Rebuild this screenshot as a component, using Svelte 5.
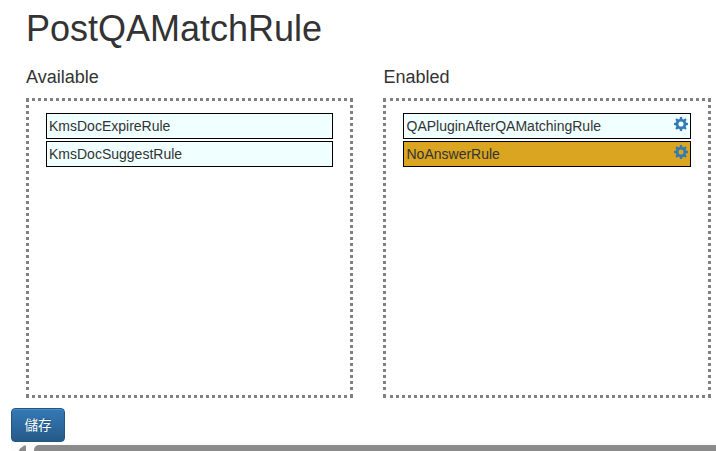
<script>
  const lists = [
    {
      title: 'Available',
      rules: [{ name: 'KmsDocExpireRule' }, { name: 'KmsDocSuggestRule' }]
    },
    {
      title: 'Enabled',
      rules: [
        { name: 'QAPluginAfterQAMatchingRule', config: true },
        { name: 'NoAnswerRule', config: true, gold: true }
      ]
    }
  ];
  const teeth = [0, 45, 90, 135, 180, 225, 270, 315];
</script>

<main>
  <h1>PostQAMatchRule</h1>
  <div class="columns">
    {#each lists as list}
      <section>
        <h4>{list.title}</h4>
        <ul>
          {#each list.rules as rule}
            <li class:gold={rule.gold}>
              <span>{rule.name}</span>
              {#if rule.config}
                <svg width="14" height="14" viewBox="-7 -7 14 14" aria-hidden="true">
                  <circle r="3.95" fill="none" stroke="#337ab7" stroke-width="2.8" />
                  {#each teeth as angle}
                    <path d="M-1.4-4.7L-1-7H1L1.4-4.7Z" fill="#337ab7" transform={`rotate(${angle})`} />
                  {/each}
                </svg>
              {/if}
            </li>
          {/each}
        </ul>
      </section>
    {/each}
  </div>
  <button type="button">儲存</button>
  <div class="scrollbar">
    <svg width="8" height="6" viewBox="0 0 8 6" aria-hidden="true">
      <path d="M0 6Q0 4.5 1.5 3.2L4.8 .8Q7 -.4 7 1.5V6Z" fill="#8b8b8b" />
    </svg>
    <div class="thumb"></div>
  </div>
</main>

<style>
  :global(body) {
    background: #fff;
    overflow: hidden;
  }
  main {
    width: 716px;
    height: 451px;
    box-sizing: border-box;
    padding-top: 9px;
    overflow: hidden;
    font: 14px/20px "Liberation Sans", Arial, "Noto Sans CJK TC", sans-serif;
    color: #333;
  }
  h1 {
    margin: 0 0 9px 26px;
    font-size: 36px;
    line-height: 40px;
    font-weight: 400;
  }
  .columns {
    display: grid;
    grid-template-columns: 327px 328px;
    column-gap: 30px;
    padding-left: 26px;
  }
  h4 {
    margin: 9px 0 11px;
    font-size: 18px;
    line-height: 20px;
    font-weight: 400;
  }
  section + section h4 {
    padding-left: 0.5px;
  }
  ul {
    box-sizing: border-box;
    height: 300px;
    margin: 0;
    padding: 12px 17px;
    border: 3px dotted gray;
    list-style: none;
  }
  li {
    box-sizing: border-box;
    display: flex;
    justify-content: space-between;
    height: 26px;
    margin-bottom: 2px;
    padding: 2px;
    border: 1px solid #000;
    background: azure;
  }
  section + section li {
    padding-left: 2.5px;
  }
  li.gold {
    background: goldenrod;
  }
  li svg {
    margin-top: 1px;
  }
  button {
    display: block;
    box-sizing: border-box;
    width: 54px;
    height: 34px;
    margin: 10px 0 0 11px;
    padding: 7px 0 5px;
    border: 1px solid #245580;
    border-radius: 4px;
    background: linear-gradient(#337ab7, #265a88);
    box-shadow: inset 0 1px 0 rgba(255, 255, 255, 0.15);
    color: #fff;
    font: 13.5px/20px "Liberation Sans", Arial, "Noto Sans CJK TC", sans-serif;
    text-shadow: 0 -1px 0 rgba(0, 0, 0, 0.2);
  }
  .scrollbar {
    display: flex;
    height: 9px;
    margin-left: 11px;
    padding: 3px 0 0 8px;
    background: #fcfcfc;
  }
  .thumb {
    flex: 1;
    height: 9px;
    margin-left: 7px;
    border-top-left-radius: 5px;
    background: #8b8b8b;
  }
</style>
